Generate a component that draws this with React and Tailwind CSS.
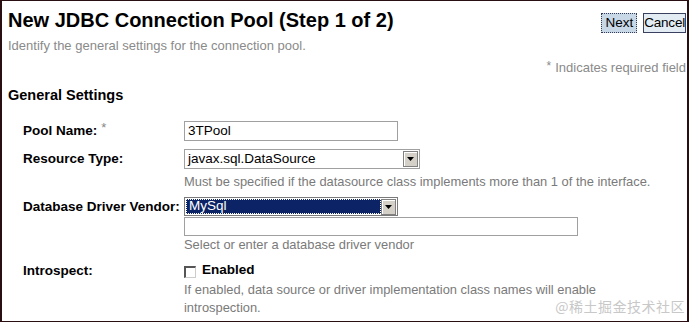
import React from "react";

function Arrow() {
  return (
    <span className="flex h-[16px] w-[15px] items-center justify-center border border-[#808080] bg-[#d4d0c8] shadow-[inset_1px_1px_0_#fff]">
      <svg width="7" height="4" viewBox="0 0 7 4">
        <path d="M0 0h7L3.5 4z" fill="#000" />
      </svg>
    </span>
  );
}

function Row({ label, required, children, className = "" }) {
  return (
    <div className={`flex ${className}`}>
      <div className="w-[161px] shrink-0 text-[13.5px] font-bold leading-[20px] text-black">
        {label}
        {required ? (
          <span className="ml-[4px] align-top text-[13px] font-normal leading-[14px] text-[#888]">*</span>
        ) : null}
      </div>
      <div className="flex flex-col">{children}</div>
    </div>
  );
}

function Help({ children, className = "" }) {
  return <div className={`text-[12.9px] leading-[18px] text-[#7a7a7a] ${className}`}>{children}</div>;
}

export default function App() {
  return (
    <div
      className="h-[323px] w-[691px] overflow-hidden bg-white"
      style={{ fontFamily: '"Liberation Sans", Arial, sans-serif' }}
    >
      <div className="relative h-[322px] w-[689px] border-l-2 border-t border-r-2 border-b border-[#2a0f12]">
        {/* Header */}
        <div className="flex items-start justify-between pl-[6px] pr-[1px] pt-[7px]">
          <div>
            <h1 className="text-[20px] font-bold leading-[24px] text-black">
              New JDBC Connection Pool (Step 1 of 2)
            </h1>
            <p className="mt-[6px] text-[13px] leading-[16px] text-[#8a8a8a]">
              Identify the general settings for the connection pool.
            </p>
          </div>
          <div className="mt-[5px] flex gap-[6px]">
            <button className="h-[20px] border border-dotted border-[#333a55] bg-[#c9d8e6] px-[3px] text-[13.5px] leading-[18px] text-black">
              Next
            </button>
            <button className="h-[20px] border border-[#3a4060] bg-[#e4ecf3] px-0 text-[13.5px] leading-[18px] tracking-[-0.2px] text-black">
              Cancel
            </button>
          </div>
        </div>

        <div className="mt-[6px] pr-[1px] text-right text-[13px] leading-[16px] text-[#8a8a8a]">
          <span className="mr-[4px] align-top text-[12px] leading-[12px]">*</span>Indicates required field
        </div>

        <div className="mt-[10px] pl-[6px] text-[14.5px] font-bold leading-[18px] text-black">
          General Settings
        </div>

        {/* Form */}
        <div className="mt-[17px] flex flex-col pl-[21px]">
          <Row label="Pool Name:" required>
            <div className="flex h-[20px] w-[214px] items-center border border-[#a0a0a0] px-[3px] text-[13.5px] text-black">
              3TPool
            </div>
          </Row>

          <Row label="Resource Type:" className="mt-[8px]">
            <div className="flex h-[20px] w-[236px] items-center justify-between border border-[#a0a0a0] pl-[3px] pr-[1px] text-[13.5px] text-black">
              <span>javax.sql.DataSource</span>
              <Arrow />
            </div>
            <Help className="mt-[4px]">
              Must be specified if the datasource class implements more than 1 of the interface.
            </Help>
          </Row>

          <Row label="Database Driver Vendor:" className="mt-[6px]">
            <div className="flex h-[19px] w-[214px] items-center justify-between border border-[#7a7a7a] bg-white p-[1px] text-[13.5px]">
              <span className="flex h-full flex-1 items-center border border-dotted border-white bg-[#0c2466] pl-[2px] text-white">
                MySql
              </span>
              <Arrow />
            </div>
            <div className="mt-[1px] h-[19px] w-[394px] border border-[#a0a0a0]" />
            <Help>Select or enter a database driver vendor</Help>
          </Row>

          <Row label="Introspect:" className="mt-[7px]">
            <div className="flex h-[19px] items-center gap-[6px]">
              <span className="mt-[3px] h-[12px] w-[12px] border-l-2 border-t-2 border-r border-b border-l-[#555] border-t-[#555] border-r-[#ccc] border-b-[#ccc] bg-white" />
              <span className="text-[13.5px] font-bold text-black">Enabled</span>
            </div>
            <Help className="mt-[1px]">
              If enabled, data source or driver implementation class names will enable
              <br />
              introspection.
            </Help>
          </Row>
        </div>

        <div
          className="absolute bottom-[4px] right-[2px] text-[14px] tracking-[0.5px] text-[#c8c8c8]"
          style={{ fontFamily: '"Noto Sans CJK SC", sans-serif' }}
        >
          @稀土掘金技术社区
        </div>
      </div>
    </div>
  );
}
